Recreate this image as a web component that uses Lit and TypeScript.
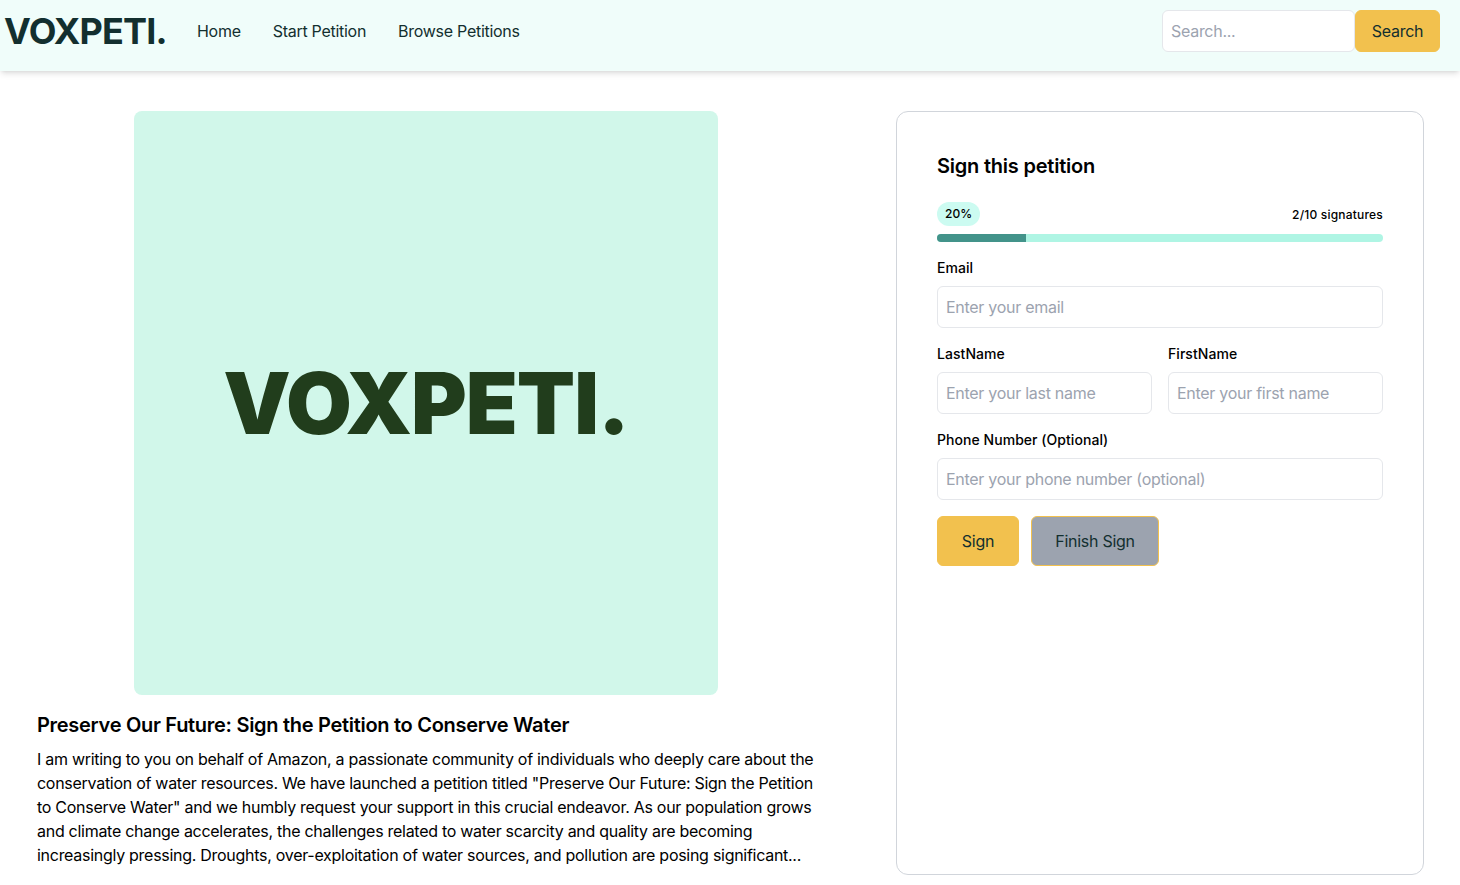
import { LitElement, html, css } from 'lit';
import { customElement } from 'lit/decorators.js';

@customElement('app-root')
export class AppRoot extends LitElement {
  render() {
    return html`
      <header class="nav">
        <div class="brand">VOXPETI.</div>
        <nav class="links">
          <a>Home</a>
          <a>Start Petition</a>
          <a>Browse Petitions</a>
        </nav>
        <form class="search">
          <input placeholder="Search..." />
          <button type="button">Search</button>
        </form>
      </header>
      <main class="page">
        <section class="story">
          <div class="cover"><span>VOXPETI.</span></div>
          <h2>Preserve Our Future: Sign the Petition to Conserve Water</h2>
          <p>
            I am writing to you on behalf of Amazon, a passionate community of individuals who deeply care about the
            conservation of water resources. We have launched a petition titled "Preserve Our Future: Sign the Petition
            to Conserve Water" and we humbly request your support in this crucial endeavor. As our population grows
            and climate change accelerates, the challenges related to water scarcity and quality are becoming
            increasingly pressing. Droughts, over-exploitation of water sources, and pollution are posing significant...
          </p>
        </section>
        <aside class="card">
          <h3>Sign this petition</h3>
          <div class="progress-head">
            <span class="badge">20%</span>
            <span class="count">2/10 signatures</span>
          </div>
          <div class="track"><div class="fill" style="width: 20%"></div></div>
          <label class="field">
            <span>Email</span>
            <input placeholder="Enter your email" />
          </label>
          <div class="pair">
            <label class="field">
              <span>LastName</span>
              <input placeholder="Enter your last name" />
            </label>
            <label class="field">
              <span>FirstName</span>
              <input placeholder="Enter your first name" />
            </label>
          </div>
          <label class="field">
            <span>Phone Number (Optional)</span>
            <input placeholder="Enter your phone number (optional)" />
          </label>
          <div class="actions">
            <button class="sign" type="button">Sign</button>
            <button class="finish" type="button">Finish Sign</button>
          </div>
        </aside>
      </main>
    `;
  }

  static styles = [
    css`
      :host {
        display: block;
        font-family: Inter, 'Noto Sans', sans-serif;
        color: #000;
      }

      * {
        box-sizing: border-box;
      }

      .nav {
        height: 71px;
        display: flex;
        align-items: flex-start;
        padding: 10px 20px 0 4px;
        background: #f0fdfa;
        box-shadow: 0 4px 6px -1px rgba(0, 0, 0, 0.1), 0 2px 4px -2px rgba(0, 0, 0, 0.1);
        position: relative;
      }

      .brand {
        font-size: 36px;
        line-height: 42px;
        font-weight: 700;
        letter-spacing: -0.8px;
        color: #132f2f;
        width: 193px;
      }

      .links {
        display: flex;
        gap: 32px;
        font-size: 16px;
        line-height: 42px;
        letter-spacing: -0.28px;
        color: #132f2f;
      }

      .search {
        margin-left: auto;
        display: flex;
      }

      input {
        height: 42px;
        width: 100%;
        border: 1px solid #e5e7eb;
        border-radius: 6px;
        background: #fff;
        padding: 0 8px;
        font: 16px Inter, 'Noto Sans', sans-serif;
        letter-spacing: -0.28px;
        color: #132f2f;
        outline: none;
      }

      input::placeholder {
        color: #9ca3af;
        opacity: 1;
      }

      button {
        font: 16px Inter, 'Noto Sans', sans-serif;
        letter-spacing: -0.28px;
        color: #132f2f;
        background: #f2c14e;
        border: 1px solid #f2c14e;
        border-radius: 6px;
        padding: 0;
      }

      .search input {
        width: 193px;
      }

      .search button {
        width: 85px;
        height: 42px;
      }

      .page {
        display: grid;
        grid-template-columns: 778px 528px;
        justify-content: space-between;
        padding: 40px 36px 0 37px;
      }

      .cover {
        width: 584px;
        height: 584px;
        margin: 0 auto;
        border-radius: 8px;
        background: #d1f7ea;
        display: flex;
        align-items: center;
        justify-content: center;
        font-size: 85px;
        font-weight: 900;
        letter-spacing: -1px;
        color: #213d1c;
      }

      h2 {
        margin: 16px 0 8px;
        font-size: 20px;
        line-height: 28px;
        font-weight: 600;
        letter-spacing: -0.29px;
      }

      p {
        margin: 0 0 8px;
        font-size: 16px;
        line-height: 24px;
        letter-spacing: -0.28px;
      }

      .card {
        border: 1px solid #d1d5db;
        border-radius: 12px;
        padding: 40px;
        display: flex;
        flex-direction: column;
      }

      h3 {
        margin: 0 0 22px;
        font-size: 20px;
        line-height: 28px;
        font-weight: 600;
        letter-spacing: -0.22px;
      }

      .progress-head {
        display: flex;
        justify-content: space-between;
        align-items: center;
        margin-bottom: 8px;
        font-size: 12px;
        font-weight: 500;
      }

      .count {
        letter-spacing: 0.2px;
      }

      .badge {
        height: 24px;
        line-height: 24px;
        padding: 0 8px;
        border-radius: 12px;
        background: #ccfbf1;
      }

      .track {
        height: 8px;
        border-radius: 4px;
        overflow: hidden;
        background: #aff5e4;
        margin-bottom: 16px;
      }

      .fill {
        height: 100%;
        background: #43938a;
      }

      .field {
        display: block;
        margin-bottom: 16px;
      }

      .field span {
        display: block;
        margin-bottom: 8px;
        font-size: 14px;
        line-height: 20px;
        font-weight: 500;
        letter-spacing: 0.05px;
      }

      .pair {
        display: grid;
        grid-template-columns: 1fr 1fr;
        gap: 16px;
      }

      .actions {
        display: flex;
        gap: 12px;
      }

      .actions button {
        height: 50px;
      }

      .sign {
        width: 82px;
      }

      .finish {
        width: 128px;
        background: #9ca3af;
      }
    `,
  ];
}
